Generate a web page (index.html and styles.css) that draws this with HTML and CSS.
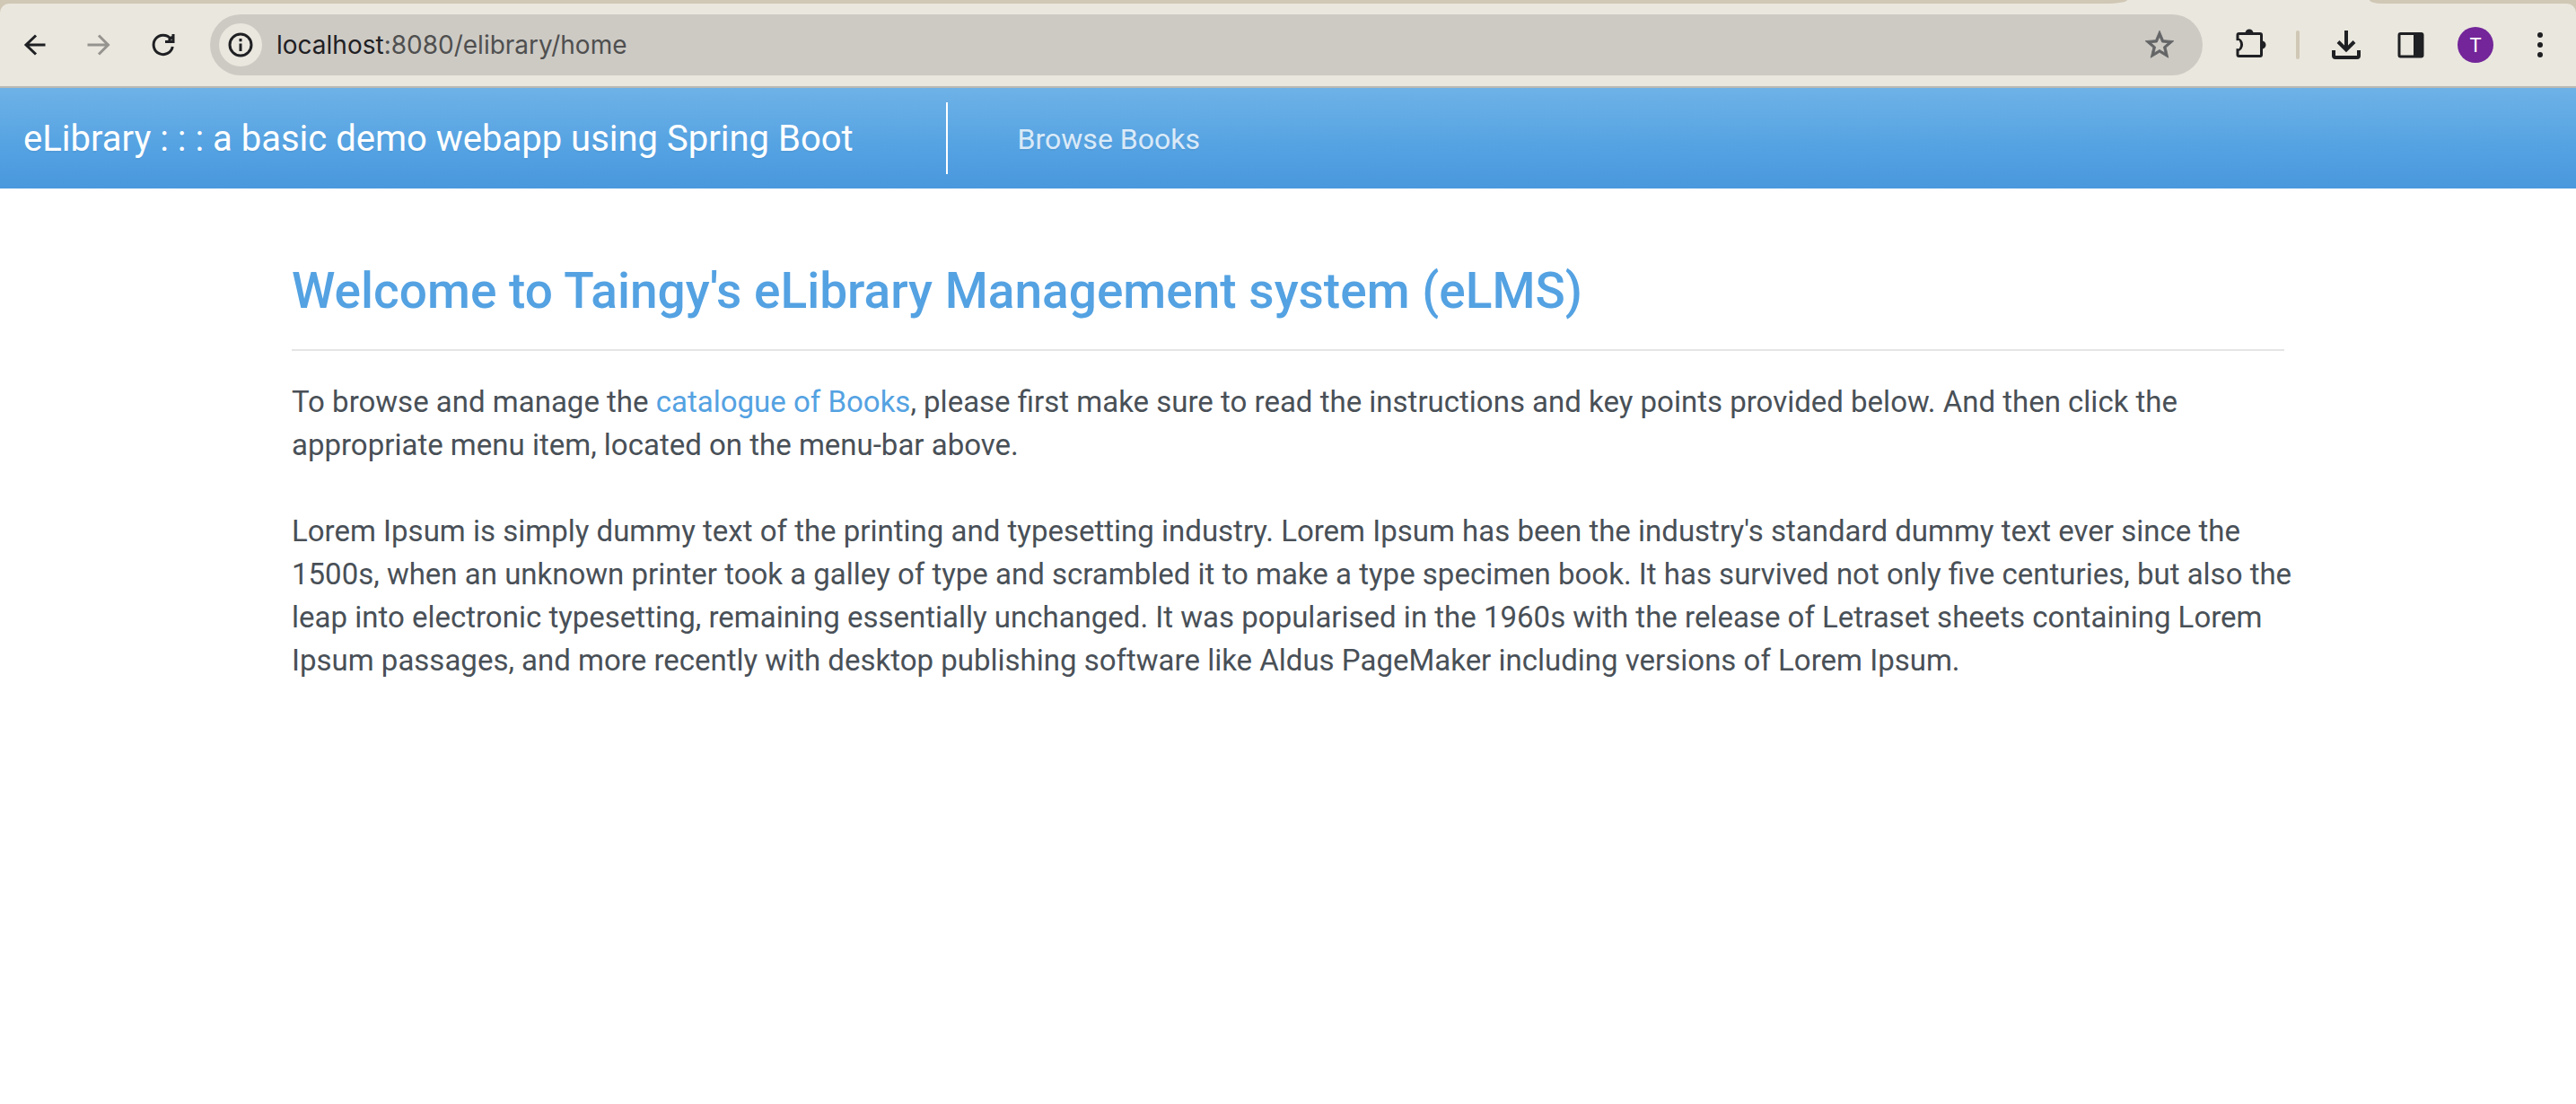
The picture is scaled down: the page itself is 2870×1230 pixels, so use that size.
FILE: index.html
```html
<!DOCTYPE html>
<html lang="en">
<head>
<meta charset="utf-8">
<title>eLibrary</title>
<link rel="stylesheet" href="styles.css">
</head>
<body>
<div class="browser">
  <div class="tab-strip">
    <span class="tabs-before"></span>
    <span class="tabs-after"></span>
  </div>
  <div class="toolbar">
    <button class="tool" type="button" aria-label="Back">
      <svg class="icon" viewBox="0 0 48 48"><path d="M36.5 24H15M26 13.5 15 24l11 10.500"/></svg>
    </button>
    <button class="tool tool-disabled" type="button" aria-label="Forward">
      <svg class="icon" viewBox="0 0 48 48"><path d="M11.500 24H34M24 13.500 34.500 24 24 34.500"/></svg>
    </button>
    <button class="tool" type="button" aria-label="Reload">
      <svg class="icon" viewBox="0 0 48 48"><path d="M34.300 26A10.700 10.700 0 1 1 32 17"/><path d="M35 12v8.500H26M30 19l4-4"/></svg>
    </button>
    <div class="address">
      <button class="site-info" type="button" aria-label="Site information">
        <svg class="icon" viewBox="0 0 48 48"><circle cx="24" cy="24" r="12"/><path d="M24 22.500v8.500M24 17v3.200"/></svg>
      </button>
      <a class="url" href="#"><span class="host">localhost</span>:8080/elibrary/home</a>
      <button class="bookmark" type="button" aria-label="Bookmark">
        <svg class="star" viewBox="0 0 24 24"><path d="M22 9.240l-7.190-.620L12 2 9.190 8.630 2 9.240l5.460 4.730L5.820 21 12 17.270 18.180 21l-1.630-7.030L22 9.240zM12 15.400l-3.760 2.270 1-4.280-3.320-2.880 4.380-.380L12 6.100l1.710 4.040 4.380.380-3.320 2.880 1 4.280L12 15.400z"/></svg>
      </button>
    </div>
    <button class="tool" type="button" aria-label="Extensions">
      <svg class="icon" viewBox="0 0 48 48"><path d="M10 18v-5q0-1.500 1.500-1.500H35q1.500 0 1.500 1.500v22q0 1.500-1.500 1.500H11.500Q10 36.500 10 35v-5.500a4.500 5.700 0 0 0 0-11.500z"/><path class="hole" d="M10 19.200v9"/><path class="solid" d="M18.500 11a4.500 4.500 0 0 1 9 0zM37 19.500a4.500 4.500 0 0 1 0 9z"/></svg>
    </button>
    <span class="separator"></span>
    <button class="tool" type="button" aria-label="Downloads">
      <svg class="icon icon-heavy" viewBox="0 0 48 48"><path d="M24 8v19M15 20.500l9 9 9-9M10 30v6q0 2 2 2h24q2 0 2-2v-6"/></svg>
    </button>
    <button class="tool" type="button" aria-label="Side panel">
      <svg class="icon" viewBox="0 0 48 48"><rect x="11" y="11.500" width="26" height="25.500" rx="1.500"/><path class="solid" d="M27 11.500h10v25H27z"/></svg>
    </button>
    <button class="tool" type="button" aria-label="Profile"><span class="avatar">T</span></button>
    <button class="tool" type="button" aria-label="Menu">
      <svg class="icon" viewBox="0 0 48 48"><g class="solid"><circle cx="24" cy="13" r="3"/><circle cx="24" cy="24" r="3"/><circle cx="24" cy="35" r="3"/></g></svg>
    </button>
  </div>
</div>
<nav class="navbar">
  <a class="brand" href="#">eLibrary : : : a basic demo webapp using Spring Boot</a>
  <a class="nav-link" href="#">Browse Books</a>
</nav>
<main class="container">
  <h1>Welcome to Taingy's eLibrary Management system (eLMS)</h1>
  <hr>
  <p>To browse and manage the <a href="#">catalogue of Books</a>, please first make sure to read the instructions and key points provided below. And then click the appropriate menu item, located on the menu-bar above.</p>
  <p>Lorem Ipsum is simply dummy text of the printing and typesetting industry. Lorem Ipsum has been the industry's standard dummy text ever since the 1500s, when an unknown printer took a galley of type and scrambled it to make a type specimen book. It has survived not only five centuries, but also the leap into electronic typesetting, remaining essentially unchanged. It was popularised in the 1960s with the release of Letraset sheets containing Lorem Ipsum passages, and more recently with desktop publishing software like Aldus PageMaker including versions of Lorem Ipsum.</p>
</main>
</body>
</html>
```

FILE: styles.css
```css
* { box-sizing: border-box; }

body {
  margin: 0;
  background: #fff;
  color: #495057;
  font: 33px/48px Roboto, "Liberation Sans", sans-serif;
}

a { color: #54a2e2; text-decoration: none; }

button {
  display: flex;
  align-items: center;
  justify-content: center;
  padding: 0;
  border: 0;
  background: none;
  color: inherit;
  font: inherit;
}

/* Browser frame */
.browser { background: #d0c7b5; color: #1f2023; font-family: Inter, "Liberation Sans", sans-serif; }

.tab-strip {
  display: flex;
  justify-content: space-between;
  height: 4px;
  background: #eae7de;
}
.tabs-before { flex: 1; background: #d0c7b5; border-bottom-right-radius: 24px 4px; }
.tabs-after { width: 230px; margin-left: 270px; background: #d0c7b5; border-bottom-left-radius: 14px 4px; }

.toolbar {
  display: flex;
  align-items: center;
  height: 94px;
  padding: 0 4px 0 2px;
  border-bottom: 2px solid #bbb8b3;
  border-radius: 10px 10px 0 0;
  background: #eae7de;
}
.tool { flex: none; width: 72px; height: 72px; }
.tool-disabled { color: #96948f; }

.icon {
  width: 48px;
  height: 48px;
  fill: none;
  stroke: currentColor;
  stroke-width: 3;
}
.icon-heavy { stroke-width: 4; }
.solid { fill: currentColor; stroke: none; }
.hole { stroke: #eae7de; stroke-width: 4; }

.address {
  display: flex;
  flex: 1;
  align-items: center;
  height: 68px;
  margin: 0 17px 0 16px;
  padding: 0 29px 0 10px;
  border-radius: 34px;
  background: #cdcac4;
}
.site-info { width: 48px; height: 48px; border-radius: 50%; background: #eae7de; }
.url { flex: 1; margin-left: 16px; color: #4f4f4f; font-size: 28px; }
.host { color: #1f2023; }
.bookmark { color: #636466; }
.star { width: 38px; height: 38px; fill: currentColor; stroke: currentColor; stroke-width: 0.5; }

.separator { width: 4px; height: 32px; margin: 0 16px 0 15px; border-radius: 2px; background: #d0c7b5; }

.avatar {
  width: 40px;
  border-radius: 50%;
  background: #732599;
  color: #fff;
  font-size: 22px;
  line-height: 40px;
}

/* Site navigation */
.navbar {
  display: flex;
  align-items: center;
  padding: 16px 26px;
  background: linear-gradient(#6eb2e7, #54a2e2 60%, #4a98dd);
  text-shadow: 0 2px 0 rgba(0, 0, 0, 0.05);
}
.brand {
  padding: 2px 103px 0 0;
  border-right: 2px solid #fff;
  color: #fff;
  font-size: 40px;
  line-height: 78px;
}
.nav-link { padding: 2px 0 0 78px; color: rgba(255, 255, 255, 0.8); font-size: 32px; }

/* Page content */
.container { max-width: 2220px; margin: 82px auto; }

h1 {
  margin: 0;
  color: #54a2e2;
  font-size: 55px;
  font-weight: 500;
  line-height: 65px;
}
hr { margin: 32px 0 33px; border: 0; border-top: 2px solid #e5e5e5; }
p { margin: 0 -20px 48px 0; }
```
